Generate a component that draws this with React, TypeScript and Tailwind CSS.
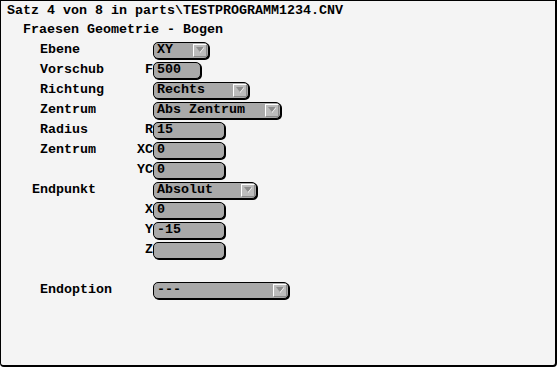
import React from 'react';

type Row = {
  label?: string;
  indent?: number;
  prefix?: string;
  kind?: 'select' | 'field';
  value?: string;
  width?: string;
};

const rows: Row[] = [
  { label: 'Ebene', kind: 'select', value: 'XY', width: 'w-[56px]' },
  { label: 'Vorschub', prefix: 'F', kind: 'field', value: '500', width: 'w-[48px]' },
  { label: 'Richtung', kind: 'select', value: 'Rechts', width: 'w-[96px]' },
  { label: 'Zentrum', kind: 'select', value: 'Abs Zentrum', width: 'w-[128px]' },
  { label: 'Radius', prefix: 'R', kind: 'field', value: '15', width: 'w-[72px]' },
  { label: 'Zentrum', prefix: 'XC', kind: 'field', value: '0', width: 'w-[72px]' },
  { prefix: 'YC', kind: 'field', value: '0', width: 'w-[72px]' },
  { label: 'Endpunkt', indent: 1, kind: 'select', value: 'Absolut', width: 'w-[104px]' },
  { prefix: 'X', kind: 'field', value: '0', width: 'w-[72px]' },
  { prefix: 'Y', kind: 'field', value: '-15', width: 'w-[72px]' },
  { prefix: 'Z', kind: 'field', value: '', width: 'w-[72px]' },
  {},
  { label: 'Endoption', kind: 'select', value: '---', width: 'w-[136px]' },
];

const Arrow = () => (
  <span className="flex h-[13px] w-[14px] items-center justify-center border-t border-l border-white border-r border-b border-r-[#8a8a8a] border-b-[#8a8a8a] bg-[#bcbcbc]">
    <svg width="8" height="6" viewBox="0 0 8 6">
      <path d="M0 0 H8 L4 5 Z" fill="#8c8c8c" />
      <path d="M4 5 L8 0 V1 L4 6 Z" fill="#ffffff" />
    </svg>
  </span>
);

const Widget = ({ row }: { row: Row }) => (
  <div
    className={`flex h-[17px] ${row.width} items-center justify-between rounded-[5px] border border-black bg-[#a9a9a9] pl-[3px] pr-[1px] shadow-[1px_1px_0_#000]`}
  >
    <span className="whitespace-pre leading-none">{row.value}</span>
    {row.kind === 'select' && <Arrow />}
  </div>
);

const App = () => {
  return (
    <div
      className="h-[367px] w-[557px] overflow-hidden rounded-b-[4px] border-t border-l border-r-2 border-b-2 border-black bg-[#f4f4f4] text-[13.33px] font-bold text-black"
      style={{ fontFamily: '"Liberation Mono", "Courier New", monospace' }}
    >
      <div className="h-[19px] pl-[6px] leading-[19px] whitespace-pre">
        Satz 4 von 8 in parts\TESTPROGRAMM1234.CNV
      </div>
      <div className="h-[20px] pl-[22px] leading-[20px] whitespace-pre">
        Fraesen Geometrie - Bogen
      </div>
      <div className="flex flex-col">
        {rows.map((row, i) => (
          <div key={i} className="flex h-[20px] items-center">
            <div className="flex w-[152px] items-center justify-between">
              <span className={row.indent ? 'pl-[31px]' : 'pl-[39px]'}>{row.label}</span>
              <span>{row.prefix}</span>
            </div>
            {row.kind && <Widget row={row} />}
          </div>
        ))}
      </div>
    </div>
  );
};

export default App;
